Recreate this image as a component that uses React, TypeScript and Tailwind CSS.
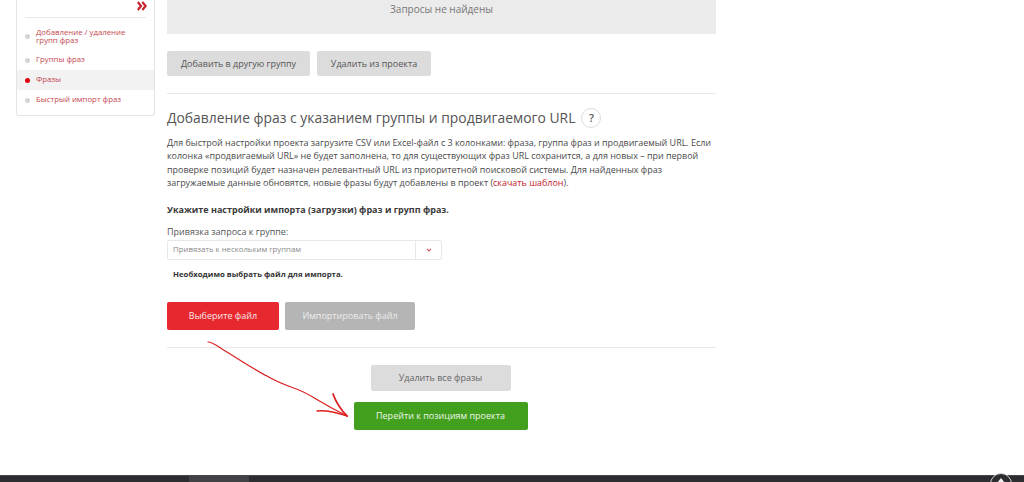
const menu = [
  { label: 'Добавление / удаление групп фраз' },
  { label: 'Группы фраз' },
  { label: 'Фразы', active: true },
  { label: 'Быстрый импорт фраз' },
];

function Sidebar() {
  return (
    <aside className="w-[139px] h-[116px] shrink-0 bg-white border border-t-0 border-[#e4e4e4] rounded-b-[3px]">
      <div className="h-[18px] mx-2 border-b border-[#e8e8e8] flex justify-end">
        <svg width="10" height="10" viewBox="0 0 10 10" className="mt-[1px] -mr-[1px]" fill="none" stroke="#c8202c" strokeWidth="2.2">
          <path d="M0.8 1 L4 5 L0.8 9" />
          <path d="M5.3 1 L8.6 5 L5.3 9" />
        </svg>
      </div>
      <ul className="mt-[8px]">
        {menu.map((item, i) => (
          <li
            key={item.label}
            className={`flex items-center h-5 px-2 text-[7.8px] leading-[8px] text-[#c4474f] ${
              item.active ? 'bg-[#f2f2f2]' : ''
            } ${i === 0 ? 'mb-[4px]' : ''}`}
          >
            <span className={`w-[5px] h-[5px] rounded-full shrink-0 mr-[6px] ${item.active ? 'bg-[#e3000f]' : 'bg-[#d4d4d4]'}`} />
            <span className={i === 0 ? '' : 'pb-[2px]'}>{item.label}</span>
          </li>
        ))}
      </ul>
    </aside>
  );
}

export default function App() {
  return (
    <div className="relative h-[482px] overflow-hidden bg-white flex flex-col font-['Open_Sans',sans-serif] text-[#444]">
      <div className="flex-1 flex pl-4 gap-3">
        <Sidebar />
        <main className="w-[549px] shrink-0">
          <div className="h-[34px] bg-[#ebebeb] flex justify-center text-[10px] leading-[18px] text-[#777]">
            Запросы не найдены
          </div>
          <div className="flex gap-[7px] mt-[17px]">
            <button type="button" className="w-[143px] h-[25px] bg-[#dcdcdc] rounded-[2px] text-[9px] text-[#555]">
              Добавить в другую группу
            </button>
            <button type="button" className="w-[114px] h-[25px] bg-[#dcdcdc] rounded-[2px] text-[9px] text-[#555]">
              Удалить из проекта
            </button>
          </div>
          <hr className="mt-[17px] border-[#e8e8e8]" />
          <div className="flex items-center mt-[14px] h-[20px]">
            <h2 className="text-[13.9px] leading-[20px] font-normal text-[#555]">
              Добавление фраз с указанием группы и продвигаемого URL
            </h2>
            <span className="ml-[6px] w-[20px] h-[20px] rounded-full border border-[#ddd] flex items-center justify-center text-[11px] font-semibold text-[#555]">
              ?
            </span>
          </div>
          <p className="mt-[8px] pr-[2px] text-[8.95px] leading-[13.4px] text-[#4a4a4a]">
            Для быстрой настройки проекта загрузите CSV или Excel-файл с 3 колонками: фраза, группа фраз и продвигаемый URL. Если колонка «продвигаемый URL» не будет заполнена, то для существующих фраз URL сохранится, а для новых – при первой проверке позиций будет назначен релевантный URL из приоритетной поисковой системы. Для найденных фраз загружаемые данные обновятся, новые фразы будут добавлены в проект (<span className="text-[#c8202c]">скачать шаблон</span>).
          </p>
          <p className="mt-[13px] text-[9px] leading-[13px] font-bold text-[#3a3a3a]">
            Укажите настройки импорта (загрузки) фраз и групп фраз.
          </p>
          <p className="mt-[9px] text-[9px] leading-[13px] text-[#555]">Привязка запроса к группе:</p>
          <div className="mt-[2px] w-[275px] h-[20px] border border-[#e8e8e8] rounded-[2px] flex items-center text-[7.8px] text-[#888]">
            <span className="flex-1 pl-[5px]">Привязать к нескольким группам</span>
            <span className="w-[26px] h-full border-l border-[#e8e8e8] flex items-center justify-center">
              <svg width="6" height="4" viewBox="0 0 6 4" fill="none" stroke="#d4505a" strokeWidth="1.1">
                <path d="M1 0.8 L3 3 L5 0.8" />
              </svg>
            </span>
          </div>
          <p className="mt-[8px] ml-[6px] text-[7.8px] leading-[12px] font-bold text-[#333]">
            Необходимо выбрать файл для импорта.
          </p>
          <div className="flex gap-[6px] mt-[22px]">
            <button type="button" className="w-[112px] h-[28px] bg-[#e8282f] rounded-[2px] text-[9px] font-normal text-[#f6e9e9]">
              Выберите файл
            </button>
            <button type="button" className="w-[130px] h-[28px] bg-[#b5b5b5] rounded-[2px] text-[9px] font-normal text-[#ececec]">
              Импортировать файл
            </button>
          </div>
          <hr className="mt-[17px] border-[#e8e8e8]" />
          <div className="flex flex-col items-center mt-[17px] pr-[2px]">
            <button type="button" className="w-[140px] h-[26px] bg-[#dcdcdc] rounded-[2px] text-[9px] text-[#666]">
              Удалить все фразы
            </button>
            <button type="button" className="w-[174px] h-[28px] mt-[11px] bg-[#43a01f] rounded-[2px] text-[9px] font-normal text-[#eef7e8]">
              Перейти к позициям проекта
            </button>
          </div>
        </main>
      </div>
      <footer className="h-[7px] shrink-0 bg-[#2c2d30] border-t border-[#45464a] pl-[189px]">
        <div className="w-[60px] h-full bg-[#404245]" />
      </footer>
      {/* scroll to top, mostly cut off by the window */}
      <div className="absolute left-[990px] top-[473px] w-[22px] h-[22px] rounded-full border border-[#cfcfcf] bg-[#2c2d30] flex justify-center pt-[4px]">
        <svg width="8" height="5" viewBox="0 0 8 5" fill="#eee"><path d="M4 0 L8 5 L0 5 Z" /></svg>
      </div>
      {/* hand-drawn arrow */}
      <svg className="absolute left-0 top-0 pointer-events-none" width="1024" height="482" fill="none" stroke="#dd1f1f" strokeLinecap="round" strokeLinejoin="round">
        <path d="M208 342 C212 342 216 345 222 349 C237 358 255 370 267 376 C275 381 283 384 291 387 C300 390 308 394 316 399 C326 405 337 411 347 416" strokeWidth="1.2" />
        <path d="M333 394 C336 402 341 410 347 416" strokeWidth="1.8" />
        <path d="M317 411 C325 410 335 412 347 416" strokeWidth="1.3" />
      </svg>
    </div>
  );
}
